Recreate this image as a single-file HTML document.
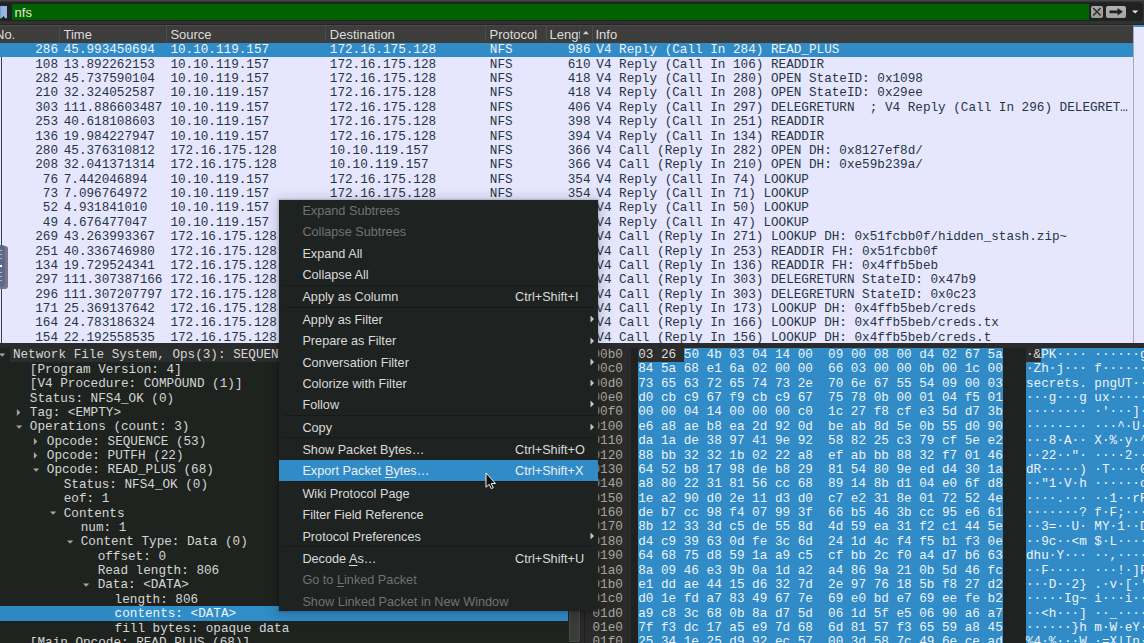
<!DOCTYPE html>
<html><head><meta charset="utf-8"><style>
*{margin:0;padding:0;box-sizing:border-box}
html,body{width:1144px;height:643px;overflow:hidden;background:#1f2120}
body{position:relative;font-family:"Liberation Sans",sans-serif}
.a{position:absolute}
.m{font-family:"Liberation Mono",monospace;font-size:12.67px;line-height:14.375px;white-space:pre}
.s{font-family:"Liberation Sans",sans-serif;white-space:pre}
</style></head><body>

<div class="a" style="left:0;top:0;width:1144px;height:25px;background:#323232"></div>
<div class="a" style="left:0;top:0;width:1144px;height:1.2px;background:#454545"></div>
<div class="a" style="left:-4px;top:3px;width:1145.6px;height:17.8px;background:#1f2220;border-radius:3.5px;box-shadow:0 0 0 0.6px #1a1b1a"></div>
<svg class="a" style="left:0;top:5.7px" width="8" height="13" viewBox="0 0 8 13"><path d="M0 0H7V12.2H5.3L3.5 10L1.7 12.2H0Z" fill="#93b6e2"/><path d="M0 0H1.2V12.2H0Z" fill="#7a9cc8"/></svg>
<div class="a" style="left:12px;top:4px;width:1077px;height:16px;background:#006300"></div>
<div class="a s" style="left:14.6px;top:5px;height:16px;line-height:16px;font-size:13px;color:#e4ecd4">nfs</div>
<div class="a" style="left:1091.1px;top:5.6px;width:11.8px;height:12px;background:linear-gradient(#a6a6a4,#9a9a98);border-radius:2px"></div>
<svg class="a" style="left:1091.1px;top:5.7px" width="12" height="12" viewBox="0 0 12 12"><path d="M2.2 1.9L9.6 9.6M9.6 1.9L2.2 9.6" stroke="#2c2e2c" stroke-width="1.5"/></svg>
<div class="a" style="left:1105.6px;top:5.6px;width:20.2px;height:12px;background:linear-gradient(#b2b2b2,#a3a3a3);border-radius:2px"></div>
<svg class="a" style="left:1105.6px;top:5.7px" width="21" height="12" viewBox="0 0 21 12"><path d="M3.5 4.5H11.6V2.1L16.9 5.75L11.6 9.4V7.2H3.5Z" fill="#1f211f"/></svg>
<svg class="a" style="left:1131px;top:9.5px" width="8" height="5" viewBox="0 0 8 5"><path d="M1 0.4H7.3L4.15 3.6Z" fill="#e4e4e4"/></svg>
<div class="a" style="left:0;top:21px;width:1144px;height:3.7px;background:#323232"></div>
<div class="a" style="left:0;top:24.3px;width:1144px;height:1px;background:#262626"></div>
<div class="a" style="left:0;top:25px;width:1133px;height:17.8px;background:#3d3d3b;border-top:1px solid #4a4a48"></div>
<div class="a s" style="left:-5px;top:26.6px;height:16px;line-height:16px;font-size:13px;color:#dcdcdc;">No.</div>
<div class="a s" style="left:63.5px;top:26.6px;height:16px;line-height:16px;font-size:13px;color:#dcdcdc;">Time</div>
<div class="a s" style="left:170.4px;top:26.6px;height:16px;line-height:16px;font-size:13px;color:#dcdcdc;">Source</div>
<div class="a s" style="left:329.8px;top:26.6px;height:16px;line-height:16px;font-size:13px;color:#dcdcdc;">Destination</div>
<div class="a s" style="left:489.5px;top:26.6px;height:16px;line-height:16px;font-size:13px;color:#dcdcdc;">Protocol</div>
<div class="a s" style="left:549.5px;top:26.6px;height:16px;line-height:16px;font-size:13px;color:#dcdcdc;width:30.2px;overflow:hidden;">Lengt</div>
<div class="a s" style="left:595.5px;top:26.6px;height:16px;line-height:16px;font-size:13px;color:#dcdcdc;">Info</div>
<div class="a" style="left:59.0px;top:26px;width:1px;height:16px;background:#4c4c4a"></div>
<div class="a" style="left:165.9px;top:26px;width:1px;height:16px;background:#4c4c4a"></div>
<div class="a" style="left:325.3px;top:26px;width:1px;height:16px;background:#4c4c4a"></div>
<div class="a" style="left:485.3px;top:26px;width:1px;height:16px;background:#4c4c4a"></div>
<div class="a" style="left:546.2px;top:26px;width:1px;height:16px;background:#4c4c4a"></div>
<div class="a" style="left:592.0px;top:26px;width:1px;height:16px;background:#4c4c4a"></div>
<svg class="a" style="left:581.8px;top:30px" width="8" height="5" viewBox="0 0 8 5"><path d="M0.8 4.3H7L3.9 1Z" fill="#d0d0d0"/></svg>
<div class="a" style="left:0;top:42.8px;width:1133px;height:300.2px;background:#e7e6ff;overflow:hidden">
<div class="a" style="left:0;top:0;width:1133px;height:14.175px;background:#308bc6"></div>
<div class="a" style="left:1px;top:14.375px;width:1px;height:300px;background:#3c3c4a"></div>
<div class="a m" style="right:1075.0px;top:0.5px;color:#eef4fa">286</div>
<div class="a m" style="left:63.7px;top:0.5px;color:#eef4fa">45.993450694</div>
<div class="a m" style="left:170.4px;top:0.5px;color:#eef4fa">10.10.119.157</div>
<div class="a m" style="left:329.8px;top:0.5px;color:#eef4fa">172.16.175.128</div>
<div class="a m" style="left:489.8px;top:0.5px;color:#eef4fa">NFS</div>
<div class="a m" style="right:542.5px;top:0.5px;color:#eef4fa">986</div>
<div class="a m" style="left:596.3px;top:0.5px;color:#eef4fa">V4 Reply (Call In 284) READ_PLUS</div>
<div class="a m" style="right:1075.0px;top:14.875px;color:#24363e">108</div>
<div class="a m" style="left:63.7px;top:14.875px;color:#24363e">13.892262153</div>
<div class="a m" style="left:170.4px;top:14.875px;color:#24363e">10.10.119.157</div>
<div class="a m" style="left:329.8px;top:14.875px;color:#24363e">172.16.175.128</div>
<div class="a m" style="left:489.8px;top:14.875px;color:#24363e">NFS</div>
<div class="a m" style="right:542.5px;top:14.875px;color:#24363e">610</div>
<div class="a m" style="left:596.3px;top:14.875px;color:#24363e">V4 Reply (Call In 106) READDIR</div>
<div class="a m" style="right:1075.0px;top:29.25px;color:#24363e">282</div>
<div class="a m" style="left:63.7px;top:29.25px;color:#24363e">45.737590104</div>
<div class="a m" style="left:170.4px;top:29.25px;color:#24363e">10.10.119.157</div>
<div class="a m" style="left:329.8px;top:29.25px;color:#24363e">172.16.175.128</div>
<div class="a m" style="left:489.8px;top:29.25px;color:#24363e">NFS</div>
<div class="a m" style="right:542.5px;top:29.25px;color:#24363e">418</div>
<div class="a m" style="left:596.3px;top:29.25px;color:#24363e">V4 Reply (Call In 280) OPEN StateID: 0x1098</div>
<div class="a m" style="right:1075.0px;top:43.625px;color:#24363e">210</div>
<div class="a m" style="left:63.7px;top:43.625px;color:#24363e">32.324052587</div>
<div class="a m" style="left:170.4px;top:43.625px;color:#24363e">10.10.119.157</div>
<div class="a m" style="left:329.8px;top:43.625px;color:#24363e">172.16.175.128</div>
<div class="a m" style="left:489.8px;top:43.625px;color:#24363e">NFS</div>
<div class="a m" style="right:542.5px;top:43.625px;color:#24363e">418</div>
<div class="a m" style="left:596.3px;top:43.625px;color:#24363e">V4 Reply (Call In 208) OPEN StateID: 0x29ee</div>
<div class="a m" style="right:1075.0px;top:58.0px;color:#24363e">303</div>
<div class="a m" style="left:63.7px;top:58.0px;color:#24363e">111.886603487</div>
<div class="a m" style="left:170.4px;top:58.0px;color:#24363e">10.10.119.157</div>
<div class="a m" style="left:329.8px;top:58.0px;color:#24363e">172.16.175.128</div>
<div class="a m" style="left:489.8px;top:58.0px;color:#24363e">NFS</div>
<div class="a m" style="right:542.5px;top:58.0px;color:#24363e">406</div>
<div class="a m" style="left:596.3px;top:58.0px;color:#24363e">V4 Reply (Call In 297) DELEGRETURN  ; V4 Reply (Call In 296) DELEGRET…</div>
<div class="a m" style="right:1075.0px;top:72.375px;color:#24363e">253</div>
<div class="a m" style="left:63.7px;top:72.375px;color:#24363e">40.618108603</div>
<div class="a m" style="left:170.4px;top:72.375px;color:#24363e">10.10.119.157</div>
<div class="a m" style="left:329.8px;top:72.375px;color:#24363e">172.16.175.128</div>
<div class="a m" style="left:489.8px;top:72.375px;color:#24363e">NFS</div>
<div class="a m" style="right:542.5px;top:72.375px;color:#24363e">398</div>
<div class="a m" style="left:596.3px;top:72.375px;color:#24363e">V4 Reply (Call In 251) READDIR</div>
<div class="a m" style="right:1075.0px;top:86.75px;color:#24363e">136</div>
<div class="a m" style="left:63.7px;top:86.75px;color:#24363e">19.984227947</div>
<div class="a m" style="left:170.4px;top:86.75px;color:#24363e">10.10.119.157</div>
<div class="a m" style="left:329.8px;top:86.75px;color:#24363e">172.16.175.128</div>
<div class="a m" style="left:489.8px;top:86.75px;color:#24363e">NFS</div>
<div class="a m" style="right:542.5px;top:86.75px;color:#24363e">394</div>
<div class="a m" style="left:596.3px;top:86.75px;color:#24363e">V4 Reply (Call In 134) READDIR</div>
<div class="a m" style="right:1075.0px;top:101.125px;color:#24363e">280</div>
<div class="a m" style="left:63.7px;top:101.125px;color:#24363e">45.376310812</div>
<div class="a m" style="left:170.4px;top:101.125px;color:#24363e">172.16.175.128</div>
<div class="a m" style="left:329.8px;top:101.125px;color:#24363e">10.10.119.157</div>
<div class="a m" style="left:489.8px;top:101.125px;color:#24363e">NFS</div>
<div class="a m" style="right:542.5px;top:101.125px;color:#24363e">366</div>
<div class="a m" style="left:596.3px;top:101.125px;color:#24363e">V4 Call (Reply In 282) OPEN DH: 0x8127ef8d/</div>
<div class="a m" style="right:1075.0px;top:115.5px;color:#24363e">208</div>
<div class="a m" style="left:63.7px;top:115.5px;color:#24363e">32.041371314</div>
<div class="a m" style="left:170.4px;top:115.5px;color:#24363e">172.16.175.128</div>
<div class="a m" style="left:329.8px;top:115.5px;color:#24363e">10.10.119.157</div>
<div class="a m" style="left:489.8px;top:115.5px;color:#24363e">NFS</div>
<div class="a m" style="right:542.5px;top:115.5px;color:#24363e">366</div>
<div class="a m" style="left:596.3px;top:115.5px;color:#24363e">V4 Call (Reply In 210) OPEN DH: 0xe59b239a/</div>
<div class="a m" style="right:1075.0px;top:129.875px;color:#24363e">76</div>
<div class="a m" style="left:63.7px;top:129.875px;color:#24363e">7.442046894</div>
<div class="a m" style="left:170.4px;top:129.875px;color:#24363e">10.10.119.157</div>
<div class="a m" style="left:329.8px;top:129.875px;color:#24363e">172.16.175.128</div>
<div class="a m" style="left:489.8px;top:129.875px;color:#24363e">NFS</div>
<div class="a m" style="right:542.5px;top:129.875px;color:#24363e">354</div>
<div class="a m" style="left:596.3px;top:129.875px;color:#24363e">V4 Reply (Call In 74) LOOKUP</div>
<div class="a m" style="right:1075.0px;top:144.25px;color:#24363e">73</div>
<div class="a m" style="left:63.7px;top:144.25px;color:#24363e">7.096764972</div>
<div class="a m" style="left:170.4px;top:144.25px;color:#24363e">10.10.119.157</div>
<div class="a m" style="left:329.8px;top:144.25px;color:#24363e">172.16.175.128</div>
<div class="a m" style="left:489.8px;top:144.25px;color:#24363e">NFS</div>
<div class="a m" style="right:542.5px;top:144.25px;color:#24363e">354</div>
<div class="a m" style="left:596.3px;top:144.25px;color:#24363e">V4 Reply (Call In 71) LOOKUP</div>
<div class="a m" style="right:1075.0px;top:158.625px;color:#24363e">52</div>
<div class="a m" style="left:63.7px;top:158.625px;color:#24363e">4.931841010</div>
<div class="a m" style="left:170.4px;top:158.625px;color:#24363e">10.10.119.157</div>
<div class="a m" style="left:329.8px;top:158.625px;color:#24363e">172.16.175.128</div>
<div class="a m" style="left:489.8px;top:158.625px;color:#24363e">NFS</div>
<div class="a m" style="right:542.5px;top:158.625px;color:#24363e">354</div>
<div class="a m" style="left:596.3px;top:158.625px;color:#24363e">V4 Reply (Call In 50) LOOKUP</div>
<div class="a m" style="right:1075.0px;top:173.0px;color:#24363e">49</div>
<div class="a m" style="left:63.7px;top:173.0px;color:#24363e">4.676477047</div>
<div class="a m" style="left:170.4px;top:173.0px;color:#24363e">10.10.119.157</div>
<div class="a m" style="left:329.8px;top:173.0px;color:#24363e">172.16.175.128</div>
<div class="a m" style="left:489.8px;top:173.0px;color:#24363e">NFS</div>
<div class="a m" style="right:542.5px;top:173.0px;color:#24363e">354</div>
<div class="a m" style="left:596.3px;top:173.0px;color:#24363e">V4 Reply (Call In 47) LOOKUP</div>
<div class="a m" style="right:1075.0px;top:187.375px;color:#24363e">269</div>
<div class="a m" style="left:63.7px;top:187.375px;color:#24363e">43.263993367</div>
<div class="a m" style="left:170.4px;top:187.375px;color:#24363e">172.16.175.128</div>
<div class="a m" style="left:329.8px;top:187.375px;color:#24363e">10.10.119.157</div>
<div class="a m" style="left:489.8px;top:187.375px;color:#24363e">NFS</div>
<div class="a m" style="right:542.5px;top:187.375px;color:#24363e">346</div>
<div class="a m" style="left:596.3px;top:187.375px;color:#24363e">V4 Call (Reply In 271) LOOKUP DH: 0x51fcbb0f/hidden_stash.zip~</div>
<div class="a m" style="right:1075.0px;top:201.75px;color:#24363e">251</div>
<div class="a m" style="left:63.7px;top:201.75px;color:#24363e">40.336746980</div>
<div class="a m" style="left:170.4px;top:201.75px;color:#24363e">172.16.175.128</div>
<div class="a m" style="left:329.8px;top:201.75px;color:#24363e">10.10.119.157</div>
<div class="a m" style="left:489.8px;top:201.75px;color:#24363e">NFS</div>
<div class="a m" style="right:542.5px;top:201.75px;color:#24363e">330</div>
<div class="a m" style="left:596.3px;top:201.75px;color:#24363e">V4 Call (Reply In 253) READDIR FH: 0x51fcbb0f</div>
<div class="a m" style="right:1075.0px;top:216.125px;color:#24363e">134</div>
<div class="a m" style="left:63.7px;top:216.125px;color:#24363e">19.729524341</div>
<div class="a m" style="left:170.4px;top:216.125px;color:#24363e">172.16.175.128</div>
<div class="a m" style="left:329.8px;top:216.125px;color:#24363e">10.10.119.157</div>
<div class="a m" style="left:489.8px;top:216.125px;color:#24363e">NFS</div>
<div class="a m" style="right:542.5px;top:216.125px;color:#24363e">330</div>
<div class="a m" style="left:596.3px;top:216.125px;color:#24363e">V4 Call (Reply In 136) READDIR FH: 0x4ffb5beb</div>
<div class="a m" style="right:1075.0px;top:230.5px;color:#24363e">297</div>
<div class="a m" style="left:63.7px;top:230.5px;color:#24363e">111.307387166</div>
<div class="a m" style="left:170.4px;top:230.5px;color:#24363e">172.16.175.128</div>
<div class="a m" style="left:329.8px;top:230.5px;color:#24363e">10.10.119.157</div>
<div class="a m" style="left:489.8px;top:230.5px;color:#24363e">NFS</div>
<div class="a m" style="right:542.5px;top:230.5px;color:#24363e">318</div>
<div class="a m" style="left:596.3px;top:230.5px;color:#24363e">V4 Call (Reply In 303) DELEGRETURN StateID: 0x47b9</div>
<div class="a m" style="right:1075.0px;top:244.875px;color:#24363e">296</div>
<div class="a m" style="left:63.7px;top:244.875px;color:#24363e">111.307207797</div>
<div class="a m" style="left:170.4px;top:244.875px;color:#24363e">172.16.175.128</div>
<div class="a m" style="left:329.8px;top:244.875px;color:#24363e">10.10.119.157</div>
<div class="a m" style="left:489.8px;top:244.875px;color:#24363e">NFS</div>
<div class="a m" style="right:542.5px;top:244.875px;color:#24363e">318</div>
<div class="a m" style="left:596.3px;top:244.875px;color:#24363e">V4 Call (Reply In 303) DELEGRETURN StateID: 0x0c23</div>
<div class="a m" style="right:1075.0px;top:259.25px;color:#24363e">171</div>
<div class="a m" style="left:63.7px;top:259.25px;color:#24363e">25.369137642</div>
<div class="a m" style="left:170.4px;top:259.25px;color:#24363e">172.16.175.128</div>
<div class="a m" style="left:329.8px;top:259.25px;color:#24363e">10.10.119.157</div>
<div class="a m" style="left:489.8px;top:259.25px;color:#24363e">NFS</div>
<div class="a m" style="right:542.5px;top:259.25px;color:#24363e">314</div>
<div class="a m" style="left:596.3px;top:259.25px;color:#24363e">V4 Call (Reply In 173) LOOKUP DH: 0x4ffb5beb/creds</div>
<div class="a m" style="right:1075.0px;top:273.625px;color:#24363e">164</div>
<div class="a m" style="left:63.7px;top:273.625px;color:#24363e">24.783186324</div>
<div class="a m" style="left:170.4px;top:273.625px;color:#24363e">172.16.175.128</div>
<div class="a m" style="left:329.8px;top:273.625px;color:#24363e">10.10.119.157</div>
<div class="a m" style="left:489.8px;top:273.625px;color:#24363e">NFS</div>
<div class="a m" style="right:542.5px;top:273.625px;color:#24363e">314</div>
<div class="a m" style="left:596.3px;top:273.625px;color:#24363e">V4 Call (Reply In 166) LOOKUP DH: 0x4ffb5beb/creds.tx</div>
<div class="a m" style="right:1075.0px;top:288.0px;color:#24363e">154</div>
<div class="a m" style="left:63.7px;top:288.0px;color:#24363e">22.192558535</div>
<div class="a m" style="left:170.4px;top:288.0px;color:#24363e">172.16.175.128</div>
<div class="a m" style="left:329.8px;top:288.0px;color:#24363e">10.10.119.157</div>
<div class="a m" style="left:489.8px;top:288.0px;color:#24363e">NFS</div>
<div class="a m" style="right:542.5px;top:288.0px;color:#24363e">310</div>
<div class="a m" style="left:596.3px;top:288.0px;color:#24363e">V4 Call (Reply In 156) LOOKUP DH: 0x4ffb5beb/creds.t</div>
</div>
<div class="a" style="left:1133px;top:25px;width:11px;height:318px;background:#e7e6ff;border-left:1px solid #a8a7b8"></div>
<div class="a" style="left:1133px;top:25px;width:11px;height:2px;background:#3a8fd0"></div>
<div class="a" style="left:-3px;top:246px;width:10.5px;height:42.5px;background:#7b7685;border-radius:3px"></div>
<div class="a" style="left:-3px;top:244.6px;width:8px;height:42.4px;background:#5a6a88;border-radius:3px"></div>
<div class="a" style="left:0;top:250.2px;width:2px;height:1px;background:#aab4c6"></div>
<div class="a" style="left:0;top:254.2px;width:2px;height:1px;background:#aab4c6"></div>
<div class="a" style="left:0;top:258.4px;width:2px;height:1px;background:#aab4c6"></div>
<div class="a" style="left:0;top:272px;width:2px;height:1px;background:#aab4c6"></div>
<div class="a" style="left:0;top:276px;width:2px;height:1px;background:#aab4c6"></div>
<div class="a" style="left:0;top:280.2px;width:2px;height:1px;background:#aab4c6"></div>
<div class="a" style="left:0;top:265px;width:1.5px;height:2px;background:#fff"></div>
<div class="a" style="left:0;top:343px;width:1144px;height:5px;background:#2b2b2b"></div>
<div class="a" style="left:0;top:348px;width:568px;height:295px;overflow:hidden;background:#1f2320">
<div class="a" style="left:10px;top:0.1px;width:560px;height:13.7px;background:#2c2e2d"></div>
<div class="a" style="left:0;top:258px;width:569px;height:14.6px;background:#308dc8"></div>
<div class="a" style="left:0;top:258px;width:112.5px;height:14.6px;background:#2e88c2"></div>
<div class="a m" style="left:12.9px;top:0.4px;color:#d6d6d6">Network File System, Ops(3): SEQUENCE PUTFH READ_PLUS</div>
<svg class="a" style="left:-2.3px;top:5.0px" width="8" height="5" viewBox="0 0 8 5"><path d="M1 0.5H7.3L4.15 3.8Z" fill="#a4a6a4"/></svg>
<div class="a m" style="left:29.85px;top:14.775px;color:#d6d6d6">[Program Version: 4]</div>
<div class="a m" style="left:29.85px;top:29.15px;color:#d6d6d6">[V4 Procedure: COMPOUND (1)]</div>
<div class="a m" style="left:29.85px;top:43.525px;color:#d6d6d6">Status: NFS4_OK (0)</div>
<div class="a m" style="left:29.85px;top:57.9px;color:#d6d6d6">Tag: &lt;EMPTY&gt;</div>
<svg class="a" style="left:16.050000000000004px;top:59.8px" width="5" height="9" viewBox="0 0 5 9"><path d="M0.9 1.1V8L4.3 4.55Z" fill="#a4a6a4"/></svg>
<div class="a m" style="left:29.85px;top:72.275px;color:#d6d6d6">Operations (count: 3)</div>
<svg class="a" style="left:14.650000000000002px;top:76.875px" width="8" height="5" viewBox="0 0 8 5"><path d="M1 0.5H7.3L4.15 3.8Z" fill="#a4a6a4"/></svg>
<div class="a m" style="left:46.8px;top:86.65px;color:#d6d6d6">Opcode: SEQUENCE (53)</div>
<svg class="a" style="left:33.0px;top:88.55000000000001px" width="5" height="9" viewBox="0 0 5 9"><path d="M0.9 1.1V8L4.3 4.55Z" fill="#a4a6a4"/></svg>
<div class="a m" style="left:46.8px;top:101.025px;color:#d6d6d6">Opcode: PUTFH (22)</div>
<svg class="a" style="left:33.0px;top:102.92500000000001px" width="5" height="9" viewBox="0 0 5 9"><path d="M0.9 1.1V8L4.3 4.55Z" fill="#a4a6a4"/></svg>
<div class="a m" style="left:46.8px;top:115.4px;color:#d6d6d6">Opcode: READ_PLUS (68)</div>
<svg class="a" style="left:31.599999999999998px;top:120.0px" width="8" height="5" viewBox="0 0 8 5"><path d="M1 0.5H7.3L4.15 3.8Z" fill="#a4a6a4"/></svg>
<div class="a m" style="left:63.74999999999999px;top:129.775px;color:#d6d6d6">Status: NFS4_OK (0)</div>
<div class="a m" style="left:63.74999999999999px;top:144.15px;color:#d6d6d6">eof: 1</div>
<div class="a m" style="left:63.74999999999999px;top:158.525px;color:#d6d6d6">Contents</div>
<svg class="a" style="left:48.55px;top:163.125px" width="8" height="5" viewBox="0 0 8 5"><path d="M1 0.5H7.3L4.15 3.8Z" fill="#a4a6a4"/></svg>
<div class="a m" style="left:80.7px;top:172.9px;color:#d6d6d6">num: 1</div>
<div class="a m" style="left:80.7px;top:187.275px;color:#d6d6d6">Content Type: Data (0)</div>
<svg class="a" style="left:65.5px;top:191.875px" width="8" height="5" viewBox="0 0 8 5"><path d="M1 0.5H7.3L4.15 3.8Z" fill="#a4a6a4"/></svg>
<div class="a m" style="left:97.65px;top:201.65px;color:#d6d6d6">offset: 0</div>
<div class="a m" style="left:97.65px;top:216.025px;color:#d6d6d6">Read length: 806</div>
<div class="a m" style="left:97.65px;top:230.4px;color:#d6d6d6">Data: &lt;DATA&gt;</div>
<svg class="a" style="left:82.45px;top:235.0px" width="8" height="5" viewBox="0 0 8 5"><path d="M1 0.5H7.3L4.15 3.8Z" fill="#a4a6a4"/></svg>
<div class="a m" style="left:114.6px;top:244.775px;color:#d6d6d6">length: 806</div>
<div class="a m" style="left:114.6px;top:259.15px;color:#eef4fa">contents: &lt;DATA&gt;</div>
<div class="a m" style="left:114.6px;top:273.525px;color:#d6d6d6">fill bytes: opaque data</div>
<div class="a m" style="left:29.85px;top:287.9px;color:#d6d6d6">[Main Opcode: READ_PLUS (68)]</div>
</div>
<div class="a" style="left:568px;top:348px;width:13px;height:295px;background:#1f2320"></div>
<div class="a" style="left:569px;top:395px;width:11.2px;height:247px;background:#3a3c3a;border:1px solid #4b4b49;border-radius:1px"></div>
<div class="a" style="left:581px;top:348px;width:3.5px;height:295px;background:#2a2a2a"></div>
<div class="a" style="left:584.2px;top:348px;width:0.8px;height:295px;background:#1c1c1c"></div>
<div class="a" style="left:585px;top:348px;width:559px;height:295px;background:#1e2220;overflow:hidden">
<div class="a" style="left:0;top:0;width:45.5px;height:295px;background:#2a2a2a"></div>
<div class="a" style="left:52.60000000000002px;top:-0.10000000000002274px;width:46px;height:14.375px;background:#2d2d2d"></div>
<div class="a" style="left:98.60000000000002px;top:-0.10000000000002274px;width:319.9px;height:14.375px;background:#308bc6"></div>
<div class="a" style="left:52.60000000000002px;top:14.274999999999977px;width:365.9px;height:300px;background:#308bc6"></div>
<div class="a" style="left:441px;top:-0.10000000000002274px;width:15.2px;height:14.375px;background:#2d2d2d"></div>
<div class="a" style="left:456.2px;top:-0.10000000000002274px;width:200px;height:14.375px;background:#308bc6"></div>
<div class="a" style="left:441px;top:14.274999999999977px;width:200px;height:300px;background:#308bc6"></div>
<div class="a m" style="left:7.5px;top:-0.10000000000002274px;color:#aca99f">00b0</div>
<div class="a m" style="left:53.200000000000024px;top:-0.10000000000002274px;color:#dcdcdc">03 26 </div>
<div class="a m" style="left:98.80000000000001px;top:-0.10000000000002274px;color:#eef4fa">50 4b 03 04 14 00  09 00 08 00 d4 02 67 5a</div>
<div class="a m" style="left:441px;top:-0.10000000000002274px;color:#dcdcdc">·&amp;</div>
<div class="a m" style="left:456.2px;top:-0.10000000000002274px;color:#eef4fa">PK···· ······gZ</div>
<div class="a m" style="left:7.5px;top:14.274999999999977px;color:#aca99f">00c0</div>
<div class="a m" style="left:53.200000000000024px;top:14.274999999999977px;color:#eef4fa">84 5a 68 e1 6a 02 00 00  66 03 00 00 0b 00 1c 00</div>
<div class="a m" style="left:441px;top:14.274999999999977px;color:#eef4fa">·Zh·j··· f·······</div>
<div class="a m" style="left:7.5px;top:28.649999999999977px;color:#aca99f">00d0</div>
<div class="a m" style="left:53.200000000000024px;top:28.649999999999977px;color:#eef4fa">73 65 63 72 65 74 73 2e  70 6e 67 55 54 09 00 03</div>
<div class="a m" style="left:441px;top:28.649999999999977px;color:#eef4fa">secrets. pngUT···</div>
<div class="a m" style="left:7.5px;top:43.02499999999998px;color:#aca99f">00e0</div>
<div class="a m" style="left:53.200000000000024px;top:43.02499999999998px;color:#eef4fa">d0 cb c9 67 f9 cb c9 67  75 78 0b 00 01 04 f5 01</div>
<div class="a m" style="left:441px;top:43.02499999999998px;color:#eef4fa">···g···g ux······</div>
<div class="a m" style="left:7.5px;top:57.39999999999998px;color:#aca99f">00f0</div>
<div class="a m" style="left:53.200000000000024px;top:57.39999999999998px;color:#eef4fa">00 00 04 14 00 00 00 c0  1c 27 f8 cf e3 5d d7 3b</div>
<div class="a m" style="left:441px;top:57.39999999999998px;color:#eef4fa">········ ·&#x27;···]·;</div>
<div class="a m" style="left:7.5px;top:71.77499999999998px;color:#aca99f">0100</div>
<div class="a m" style="left:53.200000000000024px;top:71.77499999999998px;color:#eef4fa">e6 a8 ae b8 ea 2d 92 0d  be ab 8d 5e 0b 55 d0 90</div>
<div class="a m" style="left:441px;top:71.77499999999998px;color:#eef4fa">·····-·· ···^·U··</div>
<div class="a m" style="left:7.5px;top:86.14999999999998px;color:#aca99f">0110</div>
<div class="a m" style="left:53.200000000000024px;top:86.14999999999998px;color:#eef4fa">da 1a de 38 97 41 9e 92  58 82 25 c3 79 cf 5e e2</div>
<div class="a m" style="left:441px;top:86.14999999999998px;color:#eef4fa">···8·A·· X·%·y·^·</div>
<div class="a m" style="left:7.5px;top:100.52499999999998px;color:#aca99f">0120</div>
<div class="a m" style="left:53.200000000000024px;top:100.52499999999998px;color:#eef4fa">88 bb 32 32 1b 02 22 a8  ef ab bb 88 32 f7 01 46</div>
<div class="a m" style="left:441px;top:100.52499999999998px;color:#eef4fa">··22··&quot;· ····2··F</div>
<div class="a m" style="left:7.5px;top:114.89999999999998px;color:#aca99f">0130</div>
<div class="a m" style="left:53.200000000000024px;top:114.89999999999998px;color:#eef4fa">64 52 b8 17 98 de b8 29  81 54 80 9e ed d4 30 1a</div>
<div class="a m" style="left:441px;top:114.89999999999998px;color:#eef4fa">dR·····) ·T····0·</div>
<div class="a m" style="left:7.5px;top:129.27499999999998px;color:#aca99f">0140</div>
<div class="a m" style="left:53.200000000000024px;top:129.27499999999998px;color:#eef4fa">a8 80 22 31 81 56 cc 68  89 14 8b d1 04 e0 6f d8</div>
<div class="a m" style="left:441px;top:129.27499999999998px;color:#eef4fa">··&quot;1·V·h ······o·</div>
<div class="a m" style="left:7.5px;top:143.64999999999998px;color:#aca99f">0150</div>
<div class="a m" style="left:53.200000000000024px;top:143.64999999999998px;color:#eef4fa">1e a2 90 d0 2e 11 d3 d0  c7 e2 31 8e 01 72 52 4e</div>
<div class="a m" style="left:441px;top:143.64999999999998px;color:#eef4fa">····.··· ··1··rRN</div>
<div class="a m" style="left:7.5px;top:158.02499999999998px;color:#aca99f">0160</div>
<div class="a m" style="left:53.200000000000024px;top:158.02499999999998px;color:#eef4fa">de b7 cc 98 f4 07 99 3f  66 b5 46 3b cc 95 e6 61</div>
<div class="a m" style="left:441px;top:158.02499999999998px;color:#eef4fa">·······? f·F;···a</div>
<div class="a m" style="left:7.5px;top:172.39999999999998px;color:#aca99f">0170</div>
<div class="a m" style="left:53.200000000000024px;top:172.39999999999998px;color:#eef4fa">8b 12 33 3d c5 de 55 8d  4d 59 ea 31 f2 c1 44 5e</div>
<div class="a m" style="left:441px;top:172.39999999999998px;color:#eef4fa">··3=··U· MY·1··D^</div>
<div class="a m" style="left:7.5px;top:186.77499999999998px;color:#aca99f">0180</div>
<div class="a m" style="left:53.200000000000024px;top:186.77499999999998px;color:#eef4fa">d4 c9 39 63 0d fe 3c 6d  24 1d 4c f4 f5 b1 f3 0e</div>
<div class="a m" style="left:441px;top:186.77499999999998px;color:#eef4fa">··9c··&lt;m $·L·····</div>
<div class="a m" style="left:7.5px;top:201.14999999999998px;color:#aca99f">0190</div>
<div class="a m" style="left:53.200000000000024px;top:201.14999999999998px;color:#eef4fa">64 68 75 d8 59 1a a9 c5  cf bb 2c f0 a4 d7 b6 63</div>
<div class="a m" style="left:441px;top:201.14999999999998px;color:#eef4fa">dhu·Y··· ··,····c</div>
<div class="a m" style="left:7.5px;top:215.52499999999998px;color:#aca99f">01a0</div>
<div class="a m" style="left:53.200000000000024px;top:215.52499999999998px;color:#eef4fa">8a 09 46 e3 9b 0a 1d a2  a4 86 9a 21 0b 5d 46 fc</div>
<div class="a m" style="left:441px;top:215.52499999999998px;color:#eef4fa">··F····· ···!·]F·</div>
<div class="a m" style="left:7.5px;top:229.89999999999998px;color:#aca99f">01b0</div>
<div class="a m" style="left:53.200000000000024px;top:229.89999999999998px;color:#eef4fa">e1 dd ae 44 15 d6 32 7d  2e 97 76 18 5b f8 27 d2</div>
<div class="a m" style="left:441px;top:229.89999999999998px;color:#eef4fa">···D··2} .·v·[·&#x27;·</div>
<div class="a m" style="left:7.5px;top:244.27499999999998px;color:#aca99f">01c0</div>
<div class="a m" style="left:53.200000000000024px;top:244.27499999999998px;color:#eef4fa">d0 1e fd a7 83 49 67 7e  69 e0 bd e7 69 ee fe b2</div>
<div class="a m" style="left:441px;top:244.27499999999998px;color:#eef4fa">·····Ig~ i···i···</div>
<div class="a m" style="left:7.5px;top:258.65px;color:#aca99f">01d0</div>
<div class="a m" style="left:53.200000000000024px;top:258.65px;color:#eef4fa">a9 c8 3c 68 0b 8a d7 5d  06 1d 5f e5 06 90 a6 a7</div>
<div class="a m" style="left:441px;top:258.65px;color:#eef4fa">··&lt;h···] ··_·····</div>
<div class="a m" style="left:7.5px;top:273.025px;color:#aca99f">01e0</div>
<div class="a m" style="left:53.200000000000024px;top:273.025px;color:#eef4fa">7f f3 dc 17 a5 e9 7d 68  6d 81 57 f3 65 59 a8 45</div>
<div class="a m" style="left:441px;top:273.025px;color:#eef4fa">······}h m·W·eY·E</div>
<div class="a m" style="left:7.5px;top:287.4px;color:#aca99f">01f0</div>
<div class="a m" style="left:53.200000000000024px;top:287.4px;color:#eef4fa">25 34 1e 25 d9 92 ec 57  00 3d 58 7c 49 6e ce ad</div>
<div class="a m" style="left:441px;top:287.4px;color:#eef4fa">%4·%···W ·=X|In··</div>
</div>
<div class="a" style="left:279px;top:200px;width:319px;height:410.5px;background:#1e2220;box-shadow:0 0 1.5px 0.6px rgba(0,0,0,0.16),0 2px 12px 3px rgba(0,0,0,0.17)"></div>
<div class="a s" style="left:302.4px;top:201.20px;height:21.2px;line-height:21.2px;font-size:12.7px;color:#717372">Expand Subtrees</div>
<div class="a s" style="left:302.4px;top:222.40px;height:21.2px;line-height:21.2px;font-size:12.7px;color:#717372">Collapse Subtrees</div>
<div class="a s" style="left:302.4px;top:243.60px;height:21.2px;line-height:21.2px;font-size:12.7px;color:#dadada">Expand All</div>
<div class="a s" style="left:302.4px;top:264.80px;height:21.2px;line-height:21.2px;font-size:12.7px;color:#dadada">Collapse All</div>
<div class="a" style="left:283.5px;top:284.60px;width:310px;height:1px;background:#181a19"></div>
<div class="a s" style="left:302.4px;top:287.46px;height:21.2px;line-height:21.2px;font-size:12.7px;color:#dadada">Apply as Column</div>
<div class="a s" style="left:515px;top:287.46px;height:21.2px;line-height:21.2px;font-size:12.7px;color:#dadada">Ctrl+Shift+I</div>
<div class="a" style="left:283.5px;top:307.26px;width:310px;height:1px;background:#181a19"></div>
<div class="a s" style="left:302.4px;top:310.12px;height:21.2px;line-height:21.2px;font-size:12.7px;color:#dadada">Apply as Filter</div>
<svg class="a" style="left:589.5px;top:315.32px" width="5" height="9" viewBox="0 0 5 9"><path d="M0.5 0.6V7.6L4 4.1Z" fill="#c8c8c8"/></svg>
<div class="a s" style="left:302.4px;top:331.32px;height:21.2px;line-height:21.2px;font-size:12.7px;color:#dadada">Prepare as Filter</div>
<svg class="a" style="left:589.5px;top:336.52px" width="5" height="9" viewBox="0 0 5 9"><path d="M0.5 0.6V7.6L4 4.1Z" fill="#c8c8c8"/></svg>
<div class="a s" style="left:302.4px;top:352.52px;height:21.2px;line-height:21.2px;font-size:12.7px;color:#dadada">Conversation Filter</div>
<svg class="a" style="left:589.5px;top:357.72px" width="5" height="9" viewBox="0 0 5 9"><path d="M0.5 0.6V7.6L4 4.1Z" fill="#c8c8c8"/></svg>
<div class="a s" style="left:302.4px;top:373.72px;height:21.2px;line-height:21.2px;font-size:12.7px;color:#dadada">Colorize with Filter</div>
<svg class="a" style="left:589.5px;top:378.92px" width="5" height="9" viewBox="0 0 5 9"><path d="M0.5 0.6V7.6L4 4.1Z" fill="#c8c8c8"/></svg>
<div class="a s" style="left:302.4px;top:394.92px;height:21.2px;line-height:21.2px;font-size:12.7px;color:#dadada">Follow</div>
<svg class="a" style="left:589.5px;top:400.12px" width="5" height="9" viewBox="0 0 5 9"><path d="M0.5 0.6V7.6L4 4.1Z" fill="#c8c8c8"/></svg>
<div class="a" style="left:283.5px;top:414.72px;width:310px;height:1px;background:#181a19"></div>
<div class="a s" style="left:302.4px;top:417.58px;height:21.2px;line-height:21.2px;font-size:12.7px;color:#dadada">Copy</div>
<svg class="a" style="left:589.5px;top:422.78px" width="5" height="9" viewBox="0 0 5 9"><path d="M0.5 0.6V7.6L4 4.1Z" fill="#c8c8c8"/></svg>
<div class="a" style="left:283.5px;top:437.38px;width:310px;height:1px;background:#181a19"></div>
<div class="a s" style="left:302.4px;top:440.24px;height:21.2px;line-height:21.2px;font-size:12.7px;color:#dadada">Show Packet Bytes…</div>
<div class="a s" style="left:515px;top:440.24px;height:21.2px;line-height:21.2px;font-size:12.7px;color:#dadada">Ctrl+Shift+O</div>
<div class="a" style="left:279px;top:459.8px;width:319px;height:21.2px;background:#308bc6"></div>
<div class="a s" style="left:302.4px;top:461.44px;height:21.2px;line-height:21.2px;font-size:12.7px;color:#eaf0f5">Export Packet <u style="text-decoration-thickness:1px;text-underline-offset:2px">B</u>ytes…</div>
<div class="a s" style="left:515px;top:461.44px;height:21.2px;line-height:21.2px;font-size:12.7px;color:#eaf0f5">Ctrl+Shift+X</div>
<div class="a" style="left:283.5px;top:481.24px;width:310px;height:1px;background:#181a19"></div>
<div class="a s" style="left:302.4px;top:484.10px;height:21.2px;line-height:21.2px;font-size:12.7px;color:#dadada">Wiki Protocol Page</div>
<div class="a s" style="left:302.4px;top:505.30px;height:21.2px;line-height:21.2px;font-size:12.7px;color:#dadada">Filter Field Reference</div>
<div class="a s" style="left:302.4px;top:526.50px;height:21.2px;line-height:21.2px;font-size:12.7px;color:#dadada">Protocol Preferences</div>
<svg class="a" style="left:589.5px;top:531.70px" width="5" height="9" viewBox="0 0 5 9"><path d="M0.5 0.6V7.6L4 4.1Z" fill="#c8c8c8"/></svg>
<div class="a" style="left:283.5px;top:546.30px;width:310px;height:1px;background:#181a19"></div>
<div class="a s" style="left:302.4px;top:549.16px;height:21.2px;line-height:21.2px;font-size:12.7px;color:#dadada">Decode <u style="text-decoration-thickness:1px;text-underline-offset:2px">A</u>s…</div>
<div class="a s" style="left:515px;top:549.16px;height:21.2px;line-height:21.2px;font-size:12.7px;color:#dadada">Ctrl+Shift+U</div>
<div class="a s" style="left:302.4px;top:570.36px;height:21.2px;line-height:21.2px;font-size:12.7px;color:#717372">Go to <u style="text-decoration-thickness:1px;text-underline-offset:2px">L</u>inked Packet</div>
<div class="a s" style="left:302.4px;top:591.56px;height:21.2px;line-height:21.2px;font-size:12.7px;color:#717372">Show Linked Packet in New Window</div>
<svg class="a" style="left:485.3px;top:472px" width="13" height="19" viewBox="0 0 13 19"><path d="M1 1V15.3L4.1 12.3L6.3 16.6L8.3 15.7L6.2 11.5H10.6Z" fill="#111" stroke="#f4f4f4" stroke-width="1" stroke-linejoin="round"/></svg>
</body></html>
